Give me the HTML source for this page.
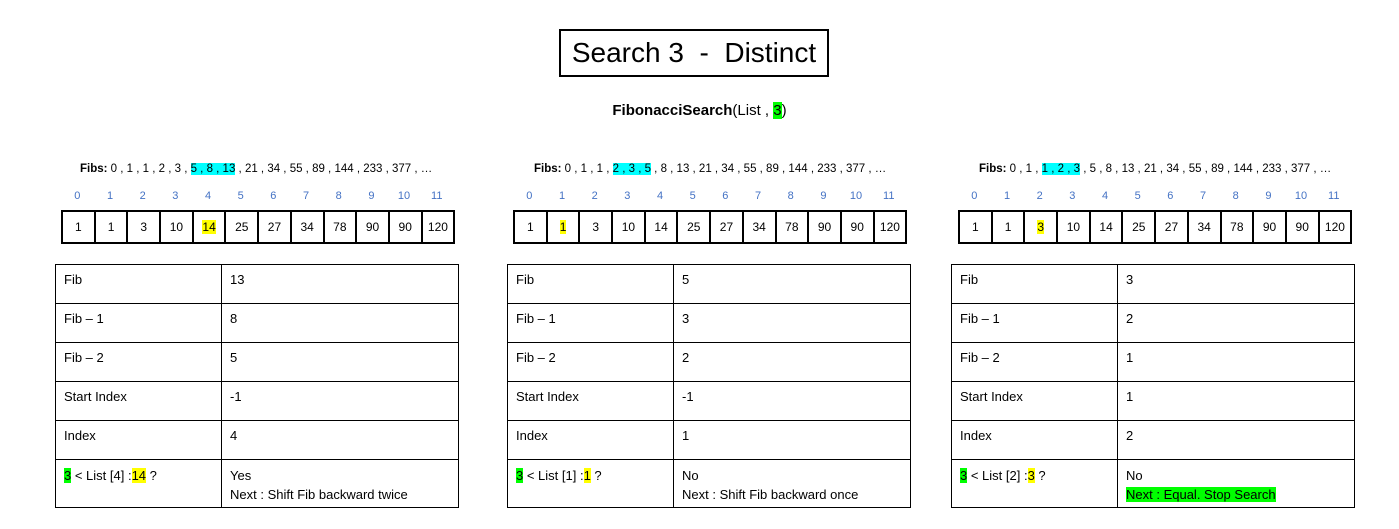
<!DOCTYPE html>
<html><head><meta charset="utf-8"><style>
body{margin:0;width:1399px;height:529px;background:#fff;font-family:"Liberation Sans",sans-serif;color:#000;position:relative;overflow:hidden}
.abs{position:absolute}
.title{left:559px;top:29px;width:266px;height:44px;border:2px solid #000;font-size:28px;line-height:44px;text-align:center;white-space:pre}
.fs{left:0;width:1399px;top:102px;text-align:center;font-size:15px}
.g{background:#00ff00}.y{background:#ffff00}.c{background:#00ffff}
.fibs{font-size:11.5px;top:163px;white-space:pre}
.idx{top:190px;width:392px;font-size:11px;color:#4472c4;display:flex}
.idx span{flex:1;text-align:center}
.arr{top:210px;border-collapse:collapse;font-size:12px}
.arr td{border:2px solid #000;width:30.7px;height:30px;text-align:center;padding:0}
.info{top:264px;border-collapse:collapse;font-size:13px}
.info td{border:1px solid #000;vertical-align:top;padding:7px 8px 0 8px;height:31px;box-sizing:content-box}
.info tr:last-child td{height:41px;padding-top:6px;line-height:19px}
</style></head><body>
<div class="abs title">Search 3  -  Distinct</div>
<div class="abs fs"><b>FibonacciSearch</b>(List , <span class="g">3</span>)</div>

<div class="abs fibs" style="left:80px"><b>Fibs:</b> 0 , 1 , 1 , 2 , 3 , <span class="c">5 , 8 , 13</span> , 21 , 34 , 55 , 89 , 144 , 233 , 377 , …</div>
<div class="abs idx" style="left:61px"><span>0</span><span>1</span><span>2</span><span>3</span><span>4</span><span>5</span><span>6</span><span>7</span><span>8</span><span>9</span><span>10</span><span>11</span></div>
<table class="abs arr" style="left:61px"><tr><td>1</td><td>1</td><td>3</td><td>10</td><td><span class="y">14</span></td><td>25</td><td>27</td><td>34</td><td>78</td><td>90</td><td>90</td><td>120</td></tr></table>
<table class="abs info" style="left:55px;width:404px">
<tr><td style="width:149px">Fib</td><td>13</td></tr>
<tr><td>Fib – 1</td><td>8</td></tr>
<tr><td>Fib – 2</td><td>5</td></tr>
<tr><td>Start Index</td><td>-1</td></tr>
<tr><td>Index</td><td>4</td></tr>
<tr><td><span class="g">3</span> &lt; List [4] :<span class="y">14</span> ?</td><td>Yes<br>Next : Shift Fib backward twice</td></tr>
</table>

<div class="abs fibs" style="left:534px"><b>Fibs:</b> 0 , 1 , 1 , <span class="c">2 , 3 , 5</span> , 8 , 13 , 21 , 34 , 55 , 89 , 144 , 233 , 377 , …</div>
<div class="abs idx" style="left:513px"><span>0</span><span>1</span><span>2</span><span>3</span><span>4</span><span>5</span><span>6</span><span>7</span><span>8</span><span>9</span><span>10</span><span>11</span></div>
<table class="abs arr" style="left:513px"><tr><td>1</td><td><span class="y">1</span></td><td>3</td><td>10</td><td>14</td><td>25</td><td>27</td><td>34</td><td>78</td><td>90</td><td>90</td><td>120</td></tr></table>
<table class="abs info" style="left:507px;width:404px">
<tr><td style="width:149px">Fib</td><td>5</td></tr>
<tr><td>Fib – 1</td><td>3</td></tr>
<tr><td>Fib – 2</td><td>2</td></tr>
<tr><td>Start Index</td><td>-1</td></tr>
<tr><td>Index</td><td>1</td></tr>
<tr><td><span class="g">3</span> &lt; List [1] :<span class="y">1</span> ?</td><td>No<br>Next : Shift Fib backward once</td></tr>
</table>

<div class="abs fibs" style="left:979px"><b>Fibs:</b> 0 , 1 , <span class="c">1 , 2 , 3</span> , 5 , 8 , 13 , 21 , 34 , 55 , 89 , 144 , 233 , 377 , …</div>
<div class="abs idx" style="left:958px"><span>0</span><span>1</span><span>2</span><span>3</span><span>4</span><span>5</span><span>6</span><span>7</span><span>8</span><span>9</span><span>10</span><span>11</span></div>
<table class="abs arr" style="left:958px"><tr><td>1</td><td>1</td><td><span class="y">3</span></td><td>10</td><td>14</td><td>25</td><td>27</td><td>34</td><td>78</td><td>90</td><td>90</td><td>120</td></tr></table>
<table class="abs info" style="left:951px;width:404px">
<tr><td style="width:149px">Fib</td><td>3</td></tr>
<tr><td>Fib – 1</td><td>2</td></tr>
<tr><td>Fib – 2</td><td>1</td></tr>
<tr><td>Start Index</td><td>1</td></tr>
<tr><td>Index</td><td>2</td></tr>
<tr><td><span class="g">3</span> &lt; List [2] :<span class="y">3</span> ?</td><td>No<br><span class="g">Next : Equal. Stop Search</span></td></tr>
</table>
</body></html>
